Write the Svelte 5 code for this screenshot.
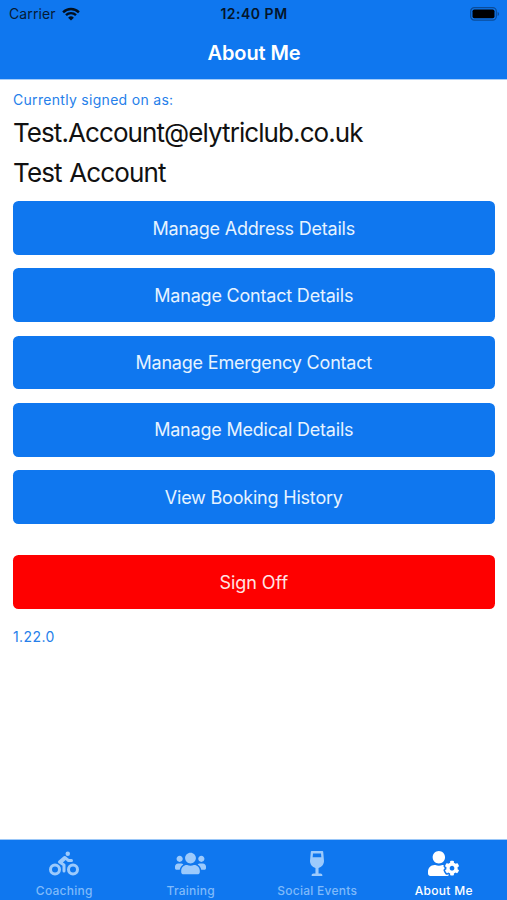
<script lang="ts">
  interface Tab {
    label: string
    viewBox: string
    width: number
    path: string
  }

  const actions: string[] = [
    'Manage Address Details',
    'Manage Contact Details',
    'Manage Emergency Contact',
    'Manage Medical Details',
    'View Booking History',
  ]

  const tabs: Tab[] = [
    {
      label: 'Coaching',
      viewBox: '0 0 640 512',
      width: 30,
      path: 'M400 96a48 48 0 1 0-48-48 48 48 0 0 0 48 48zm-4 121a31.9 31.9 0 0 0 20 7h64a32 32 0 0 0 0-64h-52.78L356 103a31.94 31.94 0 0 0-40.81.68l-112 96a32 32 0 0 0 3.08 50.92L288 305.12V416a32 32 0 0 0 64 0V288a32 32 0 0 0-14.25-26.62l-41.36-27.57 58.25-49.92zm116 39a128 128 0 1 0 128 128 128 128 0 0 0-128-128zm0 192a64 64 0 1 1 64-64 64 64 0 0 1-64 64zM128 256a128 128 0 1 0 128 128 128 128 0 0 0-128-128zm0 192a64 64 0 1 1 64-64 64 64 0 0 1-64 64z',
    },
    {
      label: 'Training',
      viewBox: '0 0 640 512',
      width: 31,
      path: 'M96 224c35.3 0 64-28.7 64-64s-28.7-64-64-64-64 28.7-64 64 28.7 64 64 64zm448 0c35.3 0 64-28.7 64-64s-28.7-64-64-64-64 28.7-64 64 28.7 64 64 64zm32 32h-64c-17.6 0-33.5 7.1-45.1 18.6 40.3 22.1 68.9 62 75.1 109.4h66c17.7 0 32-14.3 32-32v-32c0-35.3-28.7-64-64-64zm-256 0c61.9 0 112-50.1 112-112S381.9 32 320 32 208 82.1 208 144s50.1 112 112 112zm76.8 32h-8.3c-20.8 10-43.9 16-68.5 16s-47.6-6-68.5-16h-8.3C179.6 288 128 339.6 128 403.2V432c0 26.5 21.5 48 48 48h288c26.5 0 48-21.5 48-48v-28.8c0-63.6-51.6-115.2-115.2-115.2zm-223.7-13.4C161.5 263.1 145.6 256 128 256H64c-35.3 0-64 28.7-64 64v32c0 17.7 14.3 32 32 32h65.9c6.3-47.4 34.9-87.3 75.2-109.4z',
    },
    {
      label: 'Social Events',
      viewBox: '0 0 288 512',
      width: 14,
      path: 'M216 464h-40V346.81c68.47-15.89 118.05-79.91 111.4-154.16l-15.95-178.1C270.71 6.31 263.9 0 255.74 0H32.26c-8.15 0-14.97 6.31-15.7 14.55L.6 192.66C-6.05 266.91 43.53 330.93 112 346.82V464H72c-22.09 0-40 17.91-40 40 0 4.42 3.58 8 8 8h208c4.42 0 8-3.58 8-8 0-22.09-17.91-40-40-40zM61.75 48h164.5l7.17 80H54.58l7.17-80z',
    },
    {
      label: 'About Me',
      viewBox: '0 0 640 512',
      width: 31,
      path: 'M610.5 373.3c2.6-14.1 2.6-28.5 0-42.6l25.8-14.9c3-1.7 4.3-5.2 3.3-8.5-6.7-21.6-18.2-41.2-33.2-57.4-2.3-2.5-6-3.1-9-1.4l-25.8 14.9c-10.9-9.3-23.4-16.5-36.9-21.3v-29.8c0-3.4-2.4-6.4-5.7-7.1-22.3-5-45-4.8-66.2 0-3.3.7-5.7 3.7-5.7 7.1v29.8c-13.5 4.8-26 12-36.9 21.3l-25.8-14.9c-2.9-1.7-6.7-1.1-9 1.4-15 16.2-26.5 35.8-33.2 57.4-1 3.3.4 6.8 3.3 8.5l25.8 14.9c-2.6 14.1-2.6 28.5 0 42.6l-25.8 14.9c-3 1.7-4.3 5.2-3.3 8.5 6.7 21.6 18.2 41.1 33.2 57.4 2.3 2.5 6 3.1 9 1.4l25.8-14.9c10.9 9.3 23.4 16.5 36.9 21.3v29.8c0 3.4 2.4 6.4 5.7 7.1 22.3 5 45 4.8 66.2 0 3.3-.7 5.7-3.7 5.7-7.1v-29.8c13.5-4.8 26-12 36.9-21.3l25.8 14.9c2.9 1.7 6.7 1.1 9-1.4 15-16.2 26.5-35.8 33.2-57.4 1-3.3-.4-6.8-3.3-8.5l-25.8-14.9zM496 400.5c-26.8 0-48.5-21.8-48.5-48.5s21.8-48.5 48.5-48.5 48.5 21.8 48.5 48.5-21.7 48.5-48.5 48.5zM224 256c70.7 0 128-57.3 128-128S294.7 0 224 0 96 57.3 96 128s57.3 128 128 128zm201.2 226.5c-2.3-1.2-4.6-2.6-6.8-3.9l-7.9 4.6c-6 3.4-12.8 5.3-19.6 5.3-10.9 0-21.4-4.6-28.9-12.6-18.3-19.8-32.3-43.9-40.2-69.6-5.5-17.7 1.9-36.4 17.9-45.7l7.9-4.6c-.1-2.6-.1-5.2 0-7.8l-7.9-4.6c-16-9.2-23.4-28-17.9-45.7.9-2.9 2.2-5.8 3.2-8.7-3.8-.3-7.5-1.2-11.4-1.2h-16.7c-22.2 10.2-46.9 16-72.9 16s-50.6-5.8-72.9-16h-16.7C60.2 288 0 348.2 0 422.4V464c0 26.5 21.5 48 48 48h352c10.1 0 19.5-3.2 27.2-8.5-1.2-3.8-2-7.7-2-11.8v-9.2z',
    },
  ]

  let activeTab = $state('About Me')
</script>

<div class="screen">
  <header class="header">
    <div class="status-bar">
      <div class="carrier">
        <span>Carrier</span>
        <svg class="wifi" viewBox="0 0 18 14" aria-hidden="true">
          <path d="M1.1 5.3a11.2 11.2 0 0 1 15.8 0" />
          <path d="M4 8.2a7.1 7.1 0 0 1 10 0" />
          <path class="wifi-dot" d="M9 13.6L6.1 10.7a4.1 4.1 0 0 1 5.8 0z" />
        </svg>
      </div>
      <span class="clock">12:40 PM</span>
      <div class="battery">
        <svg viewBox="0 0 30 14" aria-hidden="true">
          <rect class="battery-case" x="0.7" y="0.7" width="25.6" height="12.4" rx="3.6" />
          <rect x="2.5" y="2.5" width="22" height="8.8" rx="1.8" />
          <path class="battery-tip" d="M27.6 4.7c2 .8 2 3.6 0 4.4z" />
        </svg>
      </div>
    </div>
    <h1 class="title">About Me</h1>
  </header>

  <main class="content">
    <p class="caption">Currently signed on as:</p>
    <p class="account email">Test.Account@elytriclub.co.uk</p>
    <p class="account name">Test Account</p>
    <div class="actions">
      {#each actions as action (action)}
        <button type="button" class="button">{action}</button>
      {/each}
    </div>
    <button type="button" class="button sign-off">Sign Off</button>
    <p class="caption version">1.22.0</p>
  </main>

  <nav class="tab-bar">
    {#each tabs as tab (tab.label)}
      <button
        type="button"
        class="tab"
        class:active={tab.label === activeTab}
        onclick={() => (activeTab = tab.label)}
      >
        <svg viewBox={tab.viewBox} width={tab.width} height="25" aria-hidden="true">
          <path d={tab.path} />
        </svg>
        <span>{tab.label}</span>
      </button>
    {/each}
  </nav>
</div>

<style>
  :global(body) {
    background: #fff;
    margin: 0;
  }

  .screen {
    background: #fff;
    color: #111;
    display: flex;
    flex-direction: column;
    font-family: Inter, 'Liberation Sans', sans-serif;
    height: 900px;
    overflow: hidden;
    width: 507px;
  }

  .header {
    background: #0f77ef;
    border-bottom: 1px solid #a5cdf9;
    box-sizing: border-box;
    flex: none;
    height: 80px;
  }

  .status-bar {
    align-items: center;
    color: #061b35;
    display: grid;
    font-size: 14px;
    grid-template-columns: 1fr auto 1fr;
    height: 27px;
    padding: 0 7px 0 9px;
  }

  .carrier {
    align-items: center;
    display: flex;
    gap: 6px;
    letter-spacing: 0.1px;
  }

  .wifi {
    fill: none;
    height: 14px;
    stroke: #03101f;
    stroke-width: 2.4;
    width: 18px;
  }

  .wifi-dot {
    fill: #03101f;
    stroke: none;
  }

  .clock {
    color: #04152a;
    font-weight: 600;
    letter-spacing: 0.5px;
    margin-right: 1px;
  }

  .battery {
    display: flex;
    justify-content: flex-end;
  }

  .battery svg {
    fill: #000;
    height: 14px;
    width: 30px;
  }

  .battery .battery-case {
    fill: none;
    stroke: #0b4c99;
    stroke-width: 1.2;
  }

  .battery .battery-tip {
    fill: #0b4c99;
  }

  .title {
    color: #fff;
    font-size: 20px;
    font-weight: 600;
    letter-spacing: -0.1px;
    line-height: 52px;
    margin: 0;
    padding-left: 1px;
    text-align: center;
  }

  .content {
    display: flex;
    flex: 1;
    flex-direction: column;
    padding: 10px 12.5px 0 13px;
  }

  .caption {
    color: #2680ea;
    font-size: 14px;
    letter-spacing: 0.3px;
    line-height: 20px;
    margin: 0;
  }

  .account {
    font-size: 26px;
    line-height: 40px;
    margin: 0;
  }

  .email {
    letter-spacing: -0.92px;
    margin-top: 3px;
  }

  .name {
    letter-spacing: -0.85px;
    word-spacing: 1px;
  }

  .actions {
    display: flex;
    flex-direction: column;
    gap: 13.5px;
    margin-top: 8.3px;
  }

  .button {
    background: #0f77ef;
    border: none;
    border-radius: 5.5px;
    color: #e6f3ff;
    font-family: inherit;
    font-size: 18px;
    height: 53.7px;
    letter-spacing: -0.2px;
    padding: 0.5px 0 0;
    width: 100%;
  }

  .sign-off {
    background: #fe0000;
    color: #ffe4e4;
    letter-spacing: -0.05px;
    margin-top: 31.5px;
  }

  .version {
    letter-spacing: 0.4px;
    margin-top: 18.5px;
  }

  .tab-bar {
    background: #0f77ef;
    border-top: 1px solid #9bc7f8;
    box-sizing: border-box;
    display: grid;
    flex: none;
    grid-template-columns: repeat(4, 1fr);
    height: 61px;
    padding-left: 1px;
  }

  .tab {
    align-items: center;
    background: none;
    border: none;
    color: #7fbafa;
    display: flex;
    flex-direction: column;
    font-family: inherit;
    font-size: 12px;
    font-weight: 500;
    letter-spacing: 0.25px;
    line-height: 16px;
    padding: 11px 0 0;
  }

  .tab svg {
    fill: #9ccafc;
    margin-bottom: 7px;
  }

  .active {
    color: #fff;
    letter-spacing: 0.3px;
  }

  .active svg {
    fill: #fff;
  }
</style>
